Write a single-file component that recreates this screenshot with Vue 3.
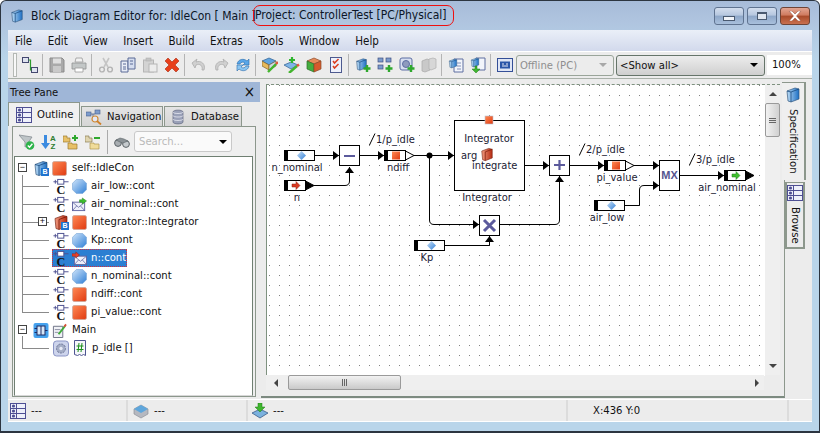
<template>
  <svg class="defs" aria-hidden="true">
    <defs>
      <linearGradient id="gBlue" x1="0" y1="0" x2="1" y2="1"><stop offset="0" stop-color="#cfe4fa"/><stop offset="1" stop-color="#2f7fd6"/></linearGradient>
      <linearGradient id="gRed" x1="0" y1="0" x2="1" y2="1"><stop offset="0" stop-color="#ff8a55"/><stop offset="1" stop-color="#e03a10"/></linearGradient>
      <linearGradient id="gBook" x1="0" y1="0" x2="1" y2="0"><stop offset="0" stop-color="#bcdcf5"/><stop offset="1" stop-color="#1c6fc4"/></linearGradient>
      <linearGradient id="gRedBook" x1="0" y1="0" x2="1" y2="0"><stop offset="0" stop-color="#f09a80"/><stop offset="1" stop-color="#b52a10"/></linearGradient>

      <symbol id="book" viewBox="0 0 16 16">
        <path d="M2 4 L10 1 L14 2 L14 12 L6 15 L3 14 Z" fill="url(#gBook)" stroke="#35597f" stroke-width=".7"/>
        <path d="M6 5 L14 2 M6 5 L6 15 M2 4 L6 5" fill="none" stroke="#17497d" stroke-width=".8"/>
      </symbol>
      <symbol id="redbook" viewBox="0 0 16 16">
        <path d="M2 4 L10 1 L14 2 L14 12 L6 15 L3 14 Z" fill="url(#gRedBook)" stroke="#7a2a1a" stroke-width=".7"/>
        <path d="M6 5 L14 2 M6 5 L6 15" fill="none" stroke="#7a1a08" stroke-width=".8"/>
      </symbol>
      <symbol id="square" viewBox="0 0 14 14"><rect x=".5" y=".5" width="13" height="13" rx="1.5" fill="url(#gRed)" stroke="#c9a79a" stroke-width=".7"/></symbol>
      <symbol id="ball" viewBox="0 0 14 14"><path d="M4 .5 H10 L13.5 4 V10 L10 13.5 H4 L.5 10 V4 Z" fill="url(#gBlue)" stroke="#7aa7d8" stroke-width=".6"/></symbol>
      <symbol id="envOut" viewBox="0 0 16 14">
        <rect x=".5" y="4.5" width="13" height="9" fill="#eef0fa" stroke="#5f649f"/>
        <path d="M.5 4.5 L7 10 L13.5 4.5 M.5 13.5 L5 8.5 M13.5 13.5 L9 8.5" fill="none" stroke="#5f649f" stroke-width=".8"/>
        <path d="M8 2 H11 V0 L15.5 3.2 L11 6.5 V4.5 H8 Z" fill="#3fbf2f" stroke="#1c7d16" stroke-width=".5"/>
      </symbol>
      <symbol id="envIn" viewBox="0 0 16 14">
        <rect x="2.5" y="4.5" width="13" height="9" fill="#eef0fa" stroke="#5f649f"/>
        <path d="M2.5 4.5 L9 10 L15.5 4.5 M2.5 13.5 L7 8.5 M15.5 13.5 L11 8.5" fill="none" stroke="#5f649f" stroke-width=".8"/>
        <path d="M0 2 H4 V0 L8 3.2 L4 6.5 V4.5 H0 Z" fill="#e8402a" stroke="#8e1d10" stroke-width=".5"/>
      </symbol>
      <symbol id="cport" viewBox="0 0 16 18">
        <path d="M0 4 H4 M11 4 H16 M2 2 V6" stroke="#4b4f8f" stroke-width="1" fill="none"/>
        <rect x="4.5" y="1.5" width="6.5" height="5" fill="#fff" stroke="#4b4f8f"/>
        <text x="8" y="17" text-anchor="middle" class="cletter">C</text>
      </symbol>
      <symbol id="grid" viewBox="0 0 16 16">
        <rect x=".5" y=".5" width="15" height="15" fill="#eef0fa" stroke="#4e4f93"/>
        <path d="M.5 5.5 H15.5 M.5 10.5 H15.5 M6.5 .5 V15.5" stroke="#4e4f93" fill="none"/>
        <circle cx="3.5" cy="3" r="1.6" fill="#4e4f93"/><circle cx="3.5" cy="8" r="1.6" fill="#4e4f93"/><circle cx="3.5" cy="13" r="1.6" fill="#4e4f93"/>
      </symbol>
      <symbol id="nav" viewBox="0 0 16 16">
        <rect x="0" y="3" width="5" height="4" fill="#7d9ccc" stroke="#47608e" stroke-width=".6"/>
        <rect x="9" y="1" width="5" height="4" fill="#7d9ccc" stroke="#47608e" stroke-width=".6"/>
        <path d="M5 5 H9 V5 M7 5 V10" stroke="#47608e" stroke-width=".8" fill="none"/>
        <circle cx="9" cy="10" r="3" fill="#e2e7f5" stroke="#d08a35" stroke-width="1.2"/>
        <path d="M11 12 L15 15.5" stroke="#d0802a" stroke-width="1.8"/>
      </symbol>
      <symbol id="db" viewBox="0 0 16 16">
        <path d="M3 3 C3 0.5 13 0.5 13 3 V13 C13 15.5 3 15.5 3 13 Z" fill="#9aa1b8" stroke="#5f6680" stroke-width=".7"/>
        <path d="M3 3 C3 5 13 5 13 3 M3 6.500 C3 8.500 13 8.500 13 6.500 M3 10 C3 12 13 12 13 10" fill="none" stroke="#e8eaf2" stroke-width=".8"/>
      </symbol>
      <symbol id="diagram" viewBox="0 0 16 16">
        <rect x=".5" y=".5" width="6" height="5" fill="#dfe2f0" stroke="#44486f"/><rect x="9.500" y="10.500" width="6" height="5" fill="#dfe2f0" stroke="#44486f"/>
        <path d="M6.500 3 H8.500 V13 H9.500" fill="none" stroke="#2c9a2c" stroke-width="1.200"/>
      </symbol>
      <symbol id="save" viewBox="0 0 16 16">
        <path d="M1 1 H13 L15 3 V15 H1 Z" fill="#a9a9a9" stroke="#8b8b8b"/>
        <rect x="4" y="1.500" width="8" height="5" fill="#dedede"/><rect x="4" y="9" width="8" height="6" fill="#c9c9c9"/>
      </symbol>
      <symbol id="print" viewBox="0 0 16 16">
        <path d="M5 1 H11 L12 5 H4 Z" fill="#f2f2f2" stroke="#9b9b9b" stroke-width=".8"/>
        <path d="M1 6 H15 V12 H1 Z" fill="#c3c7c7" stroke="#8f9393" stroke-width=".8"/>
        <path d="M4 11 H12 V15 H4 Z" fill="#fff" stroke="#9b9b9b" stroke-width=".8"/>
      </symbol>
      <symbol id="cut" viewBox="0 0 16 16">
        <path d="M5 1 L10 10 M11 1 L6 10" stroke="#c5c5c5" stroke-width="1.600" fill="none"/>
        <circle cx="4" cy="12.500" r="2.400" fill="none" stroke="#b3b3b3" stroke-width="1.400"/><circle cx="12" cy="12.500" r="2.400" fill="none" stroke="#b3b3b3" stroke-width="1.400"/>
      </symbol>
      <symbol id="copy" viewBox="0 0 16 16">
        <path d="M1 4 H8 V15 H1 Z" fill="#e9edf7" stroke="#5a6b96"/><path d="M8 1 H15 V12 H8 Z" fill="#d5ddef" stroke="#5a6b96"/>
        <path d="M3 7 H6 M3 10 H6 M3 12 H6 M10 4 H13 M10 7 H13" stroke="#5a6b96"/>
      </symbol>
      <symbol id="paste" viewBox="0 0 16 16">
        <rect x="1.500" y="3" width="10" height="12" fill="#d3d3d3" stroke="#b5b5b5"/><rect x="4" y="1" width="5" height="3" fill="#c4c4c4" stroke="#b0b0b0" stroke-width=".6"/>
        <rect x="7" y="7" width="8" height="8" fill="#ececec" stroke="#b5b5b5"/>
      </symbol>
      <symbol id="del" viewBox="0 0 16 16">
        <path d="M1 4 L4 1 L8 5 L12 1 L15 4 L11 8 L15 12 L12 15 L8 11 L4 15 L1 12 L5 8 Z" fill="#e8401c" stroke="#a82c10" stroke-width=".6"/>
      </symbol>
      <symbol id="undo" viewBox="0 0 16 16">
        <path d="M13 13 C15 7 10 3 5 5 L6 2 L1 6 L4 11 L5 8 C9 6 12 9 11 13 Z" fill="#d0d0d0" stroke="#adadad" stroke-width=".8"/>
      </symbol>
      <symbol id="redo" viewBox="0 0 16 16">
        <path d="M3 13 C1 7 6 3 11 5 L10 2 L15 6 L12 11 L11 8 C7 6 4 9 5 13 Z" fill="#d0d0d0" stroke="#adadad" stroke-width=".8"/>
      </symbol>
      <symbol id="refresh" viewBox="0 0 16 16">
        <path d="M2 7 C3 2 9 1 12 4 L14 2 V8 H8 L10 6 C8 4.500 6 5 5 7 Z" fill="#58a6e8" stroke="#2a6cab" stroke-width=".6"/>
        <path d="M14 9 C13 14 7 15 4 12 L2 14 V8 H8 L6 10 C8 11.500 10 11 11 9 Z" fill="#8cc6f2" stroke="#2a6cab" stroke-width=".6"/>
      </symbol>
      <symbol id="buildA" viewBox="0 0 16 16">
        <path d="M7 1 L14 4 L7 8 L0 4 Z" fill="#5fa4e0" stroke="#2f5f90" stroke-width=".7"/>
        <path d="M0 4 L7 8 V13 L0 9 Z" fill="#e7b95b" stroke="#7a6130" stroke-width=".7"/><path d="M14 4 L7 8 V13 L14 9 Z" fill="#cfd6e4" stroke="#7a6130" stroke-width=".7"/>
        <path d="M6 15 L14 7" stroke="#43b52e" stroke-width="2.400"/><path d="M14 7 L16 5" stroke="#e0553a" stroke-width="2.400"/>
      </symbol>
      <symbol id="buildB" viewBox="0 0 16 16">
        <path d="M7 5 L14 8 L7 12 L0 8 Z" fill="#7fb5e6" stroke="#2f5f90" stroke-width=".7"/>
        <path d="M8 0 V6 M5 3 H11" stroke="#2fb52e" stroke-width="2.200"/>
        <path d="M5 16 L13 9" stroke="#43b52e" stroke-width="2.400"/><path d="M13 9 L15 7.500" stroke="#e0553a" stroke-width="2.400"/>
      </symbol>
      <symbol id="buildC" viewBox="0 0 16 16">
        <path d="M8 1 L15 4 L8 7 L1 4 Z" fill="#e78b5a" stroke="#8a4a2a" stroke-width=".7"/>
        <path d="M1 4 L8 7 V15 L1 12 Z" fill="#44ad3e" stroke="#2c6f29" stroke-width=".7"/><path d="M15 4 L8 7 V15 L15 12 Z" fill="#d65a2c" stroke="#8a4a2a" stroke-width=".7"/>
      </symbol>
      <symbol id="check" viewBox="0 0 16 16">
        <rect x="2.500" y=".5" width="11" height="15" fill="#eef1fb" stroke="#4d5a8f"/>
        <path d="M5 4 L6.500 6 L10.500 2 M5 9 L6.500 11 L10.500 7" fill="none" stroke="#dc3d1f" stroke-width="1.500"/>
      </symbol>
      <symbol id="plusBook" viewBox="0 0 16 16">
        <use href="#book" width="13" height="15"/>
        <path d="M12 8 V15 M8.500 11.500 H15.500" stroke="#2fa82e" stroke-width="2.400"/>
      </symbol>
      <symbol id="plusBlock" viewBox="0 0 16 16">
        <rect x="1" y="1" width="5" height="4" fill="#7b9ccc" stroke="#3f4f80" stroke-width=".7"/><rect x="9" y="1" width="5" height="4" fill="#7b9ccc" stroke="#3f4f80" stroke-width=".7"/><rect x="1" y="8" width="5" height="4" fill="#7b9ccc" stroke="#3f4f80" stroke-width=".7"/>
        <path d="M12 8 V15 M8.500 11.500 H15.500" stroke="#2fa82e" stroke-width="2.400"/>
      </symbol>
      <symbol id="plusGear" viewBox="0 0 16 16">
        <rect x="1" y="1" width="12" height="12" rx="2" fill="#d7def0" stroke="#5d6ea3"/><circle cx="7" cy="7" r="3.500" fill="#8e9bbe" stroke="#5d6ea3"/>
        <path d="M12 8 V15 M8.500 11.500 H15.500" stroke="#2fa82e" stroke-width="2.400"/>
      </symbol>
      <symbol id="grayBooks" viewBox="0 0 16 16">
        <path d="M1 4 L6 2 L9 3 V13 L4 15 L1 14 Z" fill="#c9c9c9" stroke="#a9a9a9" stroke-width=".7"/><path d="M8 2 L12 1 L15 2 V11 L10 13 L8 12 Z" fill="#d7d7d7" stroke="#b0b0b0" stroke-width=".7"/>
      </symbol>
      <symbol id="docBook" viewBox="0 0 16 16">
        <path d="M6 2 H15 V15 H6 Z" fill="#f2f5fb" stroke="#5f6ea0"/><path d="M9 6 H13 M9 9 H13 M9 12 H13" stroke="#8390b8"/>
        <use href="#book" width="10" height="13"/>
      </symbol>
      <symbol id="docDown" viewBox="0 0 16 16">
        <path d="M6 1 H15 V13 H6 Z" fill="#f2f5fb" stroke="#5f6ea0"/>
        <use href="#book" width="10" height="11"/>
        <path d="M5 9 V12 H2 L6 16 L10 12 H7 V9 Z" fill="#3fb52f" stroke="#1e7d16" stroke-width=".5"/>
      </symbol>
      <symbol id="target" viewBox="0 0 16 14">
        <rect x=".5" y=".5" width="15" height="13" fill="#dfe6f5" stroke="#344f97"/>
        <rect x="3" y="3.500" width="10" height="7" fill="#2a56a8"/><path d="M5 6 H7 M9 6 H11 M5 8 H11" stroke="#e5e9f5"/>
      </symbol>
      <symbol id="funnel" viewBox="0 0 16 16">
        <path d="M0 1 L13 3 L9 9 V12 L6 13 V8 Z" fill="#bfc5c8" stroke="#7d8489" stroke-width=".7"/>
        <circle cx="11" cy="11.500" r="4.300" fill="#2eb34a"/><path d="M8.800 11.500 L10.500 13.200 L13.400 9.800" fill="none" stroke="#fff" stroke-width="1.400"/>
      </symbol>
      <symbol id="sort" viewBox="0 0 16 16">
        <path d="M3 1 H6 V9 H9 L4.500 15 L0 9 H3 Z" fill="#3c8be0"/>
        <text x="12" y="7" text-anchor="middle" class="sortletter">A</text><text x="12" y="15" text-anchor="middle" class="sortletter">Z</text>
      </symbol>
      <symbol id="folderPlus" viewBox="0 0 16 16">
        <path d="M0 2 H4 V4 H7 V8 H0 Z M5 9 H9 V10 H14 V15 H5 Z" fill="#e8c168" stroke="#9b7c30" stroke-width=".7"/>
        <path d="M12 1 V7 M9 4 H15" stroke="#2fa82e" stroke-width="2"/>
      </symbol>
      <symbol id="folderMinus" viewBox="0 0 16 16">
        <path d="M0 2 H4 V4 H7 V8 H0 Z" fill="#e0d5af" stroke="#8b7f55" stroke-width=".7"/>
        <path d="M5 9 H9 V10 H14 V15 H5 Z" fill="#f0dc9a" stroke="#b09a50" stroke-width=".7"/>
        <path d="M9 4 H15" stroke="#2fa82e" stroke-width="2"/>
      </symbol>
      <symbol id="binoc" viewBox="0 0 16 16">
        <circle cx="4" cy="9" r="3.400" fill="#a9aeb2" stroke="#5d6468"/><circle cx="12" cy="10" r="3.400" fill="#c6cbce" stroke="#5d6468"/>
        <path d="M2 6 L6 4 L10 5 L14 7 L9 9 L6 8 Z" fill="#8b9296" stroke="#5d6468" stroke-width=".6"/>
      </symbol>
      <symbol id="main" viewBox="0 0 16 16">
        <rect x=".5" y=".5" width="15" height="15" rx="2" fill="#46a2ee"/><rect x="4" y="3.500" width="8" height="9" fill="#d7e6f7" stroke="#1d2c66"/>
        <path d="M8 3.500 V12.500 M1.500 6 H4 M1.500 10 H4 M12 8 H14.500" stroke="#1d2c66"/>
      </symbol>
      <symbol id="note" viewBox="0 0 16 16">
        <path d="M1.500 3.500 H11.500 V15.500 H1.500 Z" fill="#f0f1f6" stroke="#6a6f82"/>
        <path d="M3 7 H9 M3 10 H7" stroke="#8c90a3"/><path d="M7 12 L14 3" stroke="#3eaa3a" stroke-width="2"/><path d="M13 4 L15 1.500" stroke="#d9503a" stroke-width="2"/>
      </symbol>
      <symbol id="gear" viewBox="0 0 16 16">
        <rect x=".5" y=".5" width="15" height="15" rx="3" fill="#cdd4ec" stroke="#8b95c5"/><circle cx="8" cy="8" r="4.500" fill="#a4adc6" stroke="#6d7698" stroke-dasharray="2 1"/><circle cx="8" cy="8" r="1.700" fill="#e7eaf5"/>
      </symbol>
      <symbol id="hash" viewBox="0 0 12 16">
        <path d="M.5 .5 H11.500 V15.500 L9.500 14.500 L7.500 15.500 L5.500 14.500 L3.500 15.500 L.5 14.500 Z" fill="#f6f7fb" stroke="#4e5590"/>
        <path d="M5 3 L4 12 M8 3 L7 12 M2.500 6 H9.500 M2.500 9.500 H9.500" stroke="#1c8f1c" stroke-width="1"/>
      </symbol>
      <symbol id="chip" viewBox="0 0 16 16">
        <path d="M1 6 L8 2 L15 6 V11 L8 15 L1 11 Z" fill="#b5b8c0" stroke="#85888f" stroke-width=".6"/><path d="M1 6 L8 10 L15 6 L8 2 Z" fill="#5ea6dc"/>
      </symbol>
      <symbol id="loadDown" viewBox="0 0 16 16">
        <path d="M0 10 L8 6 L16 10 L8 15 Z" fill="#7bb1de" stroke="#2d4f7c" stroke-width=".7"/>
        <path d="M6 0 H10 V4 H13 L8 9 L3 4 H6 Z" fill="#3fb52f" stroke="#1e7d16" stroke-width=".5"/>
      </symbol>
    </defs>
  </svg>

  <div class="window">
    <header class="titlebar">
      <svg class="title-icon"><use href="#book"/></svg>
      <span class="title-text">Block Diagram Editor for: IdleCon [ Main ]</span>
      <span class="project-mark">Project: ControllerTest [PC/Physical]</span>
      <div class="caption-buttons">
        <button class="cap"><i class="cap-min"></i></button>
        <button class="cap"><i class="cap-max"></i></button>
        <button class="cap cap-close">
          <svg viewBox="0 0 14 10" width="14" height="10"><path d="M1 0 H4 L7 3 L10 0 H13 L8.500 5 L13 10 H10 L7 7 L4 10 H1 L5.500 5 Z" fill="#fff" stroke="#8a4a3a" stroke-width=".5"/></svg>
        </button>
      </div>
    </header>

    <nav class="menubar">
      <span v-for="item in menuItems" :key="item">{{ item }}</span>
    </nav>

    <div class="toolbar">
      <i class="grip"></i>
      <template v-for="(tool, i) in tools" :key="i">
        <i v-if="tool === '|'" class="tool-sep"></i>
        <svg v-else class="tool"><use :href="'#' + tool"/></svg>
      </template>
      <div class="combo combo-offline"><span>Offline (PC)</span><i class="arrow arrow-gray"></i></div>
      <div class="combo combo-show"><span>&lt;Show all&gt;</span><i class="arrow"></i></div>
      <div class="zoom-field">100%</div>
    </div>

    <main class="content">
      <section class="tree-pane">
        <div class="pane-title"><span>Tree Pane</span><b>×</b></div>
        <div class="tabs">
          <div class="tab tab-on"><svg class="ic16"><use href="#grid"/></svg>Outline</div>
          <div class="tab tab-nav"><svg class="ic16"><use href="#nav"/></svg>Navigation</div>
          <div class="tab tab-db"><svg class="ic16"><use href="#db"/></svg>Database</div>
        </div>
        <div class="pane-body">
          <div class="pane-tools">
            <svg class="ic16"><use href="#funnel"/></svg>
            <svg class="ic16"><use href="#sort"/></svg>
            <svg class="ic16"><use href="#folderPlus"/></svg>
            <svg class="ic16"><use href="#folderMinus"/></svg>
            <i class="pane-sep"></i>
            <svg class="ic16"><use href="#binoc"/></svg>
            <div class="search"><span>Search...</span><i class="arrow"></i></div>
          </div>
          <div class="tree">
            <i class="tree-line line-a"></i>
            <i class="tree-line line-b"></i>
            <div v-for="row in treeRows" :key="row.label" class="row" :class="{ 'row-top': row.top }">
              <i v-if="row.toggle" class="toggle" :class="row.top ? 'toggle-top' : 'toggle-sub'">{{ row.toggle }}</i>
              <i v-if="!row.top" class="branch"></i>
              <div class="row-body" :class="{ selected: row.selected }">
                <svg class="row-ic"><use :href="'#' + row.icon"/></svg>
                <small v-if="row.badge" class="badge">B</small>
                <svg class="row-ic row-ic2" :class="row.icon2 === 'hash' ? 'ic-hash' : ''"><use :href="'#' + row.icon2"/></svg>
                <span class="row-text">{{ row.label }}</span>
              </div>
            </div>
          </div>
        </div>
      </section>

      <section class="editor">
        <div class="editor-frame">
          <div class="editor-top">
            <svg class="canvas" viewBox="267 87 498 291" width="498" height="291">
              <defs>
                <pattern id="dots" x="0" y="0" width="10" height="10" patternUnits="userSpaceOnUse">
                  <rect x="9" y="7" width="1" height="1" fill="#808080"/>
                </pattern>
                <marker id="ah" markerWidth="7" markerHeight="9" refX="6" refY="4.500" orient="auto" markerUnits="userSpaceOnUse">
                  <path d="M0 0 L6 4.500 L0 9 Z" fill="#000"/>
                </marker>
              </defs>
              <rect x="267" y="87" width="498" height="291" fill="#fff"/>
              <rect x="267" y="87" width="498" height="291" fill="url(#dots)"/>

              <path v-for="w in wires" :key="w" :d="w" class="wire" marker-end="url(#ah)"/>
              <path d="M414 157.500 H429" class="wire"/>
              <circle cx="429.500" cy="157.500" r="3" fill="#000"/>

              <g v-for="p in ports" :key="p.label">
                <path v-if="p.tip" :d="`M${p.x + 20.500} ${p.y + .5} L${p.x + 30} ${p.y + 5.500} L${p.x + 20.500} ${p.y + 10.500} Z`" :fill="p.tip" stroke="#000"/>
                <rect :x="p.x + .5" :y="p.y + .5" :width="p.w" height="10" fill="#fff" stroke="#000"/>
                <rect :x="p.x" :y="p.y" width="4" height="11" fill="#000"/>
                <path v-if="p.mark === 'diamond'" :d="`M${p.x + 17.500} ${p.y + 1} l4.500 4.500 l-4.500 4.500 l-4.500 -4.500 Z`" fill="url(#gBlue)"/>
                <rect v-else-if="p.mark === 'square'" :x="p.x + 8" :y="p.y + 1.500" width="8" height="8" fill="url(#gRed)"/>
                <path v-else-if="p.mark === 'in'" :d="`M${p.x + 8} ${p.y + 4} h4 v-2.500 l4 4 l-4 4 v-2.500 h-4 Z`" fill="#d93a22" stroke="#8e1d10" stroke-width=".5"/>
                <path v-else-if="p.mark === 'out'" :d="`M${p.x + 8} ${p.y + 4} h4 v-2.500 l4 4 l-4 4 v-2.500 h-4 Z`" fill="#3fbf2f" stroke="#1c7d16" stroke-width=".5"/>
                <text :x="p.lx" :y="p.y + 20.500" text-anchor="middle" class="dtext">{{ p.label }}</text>
              </g>

              <rect v-for="b in opBoxes" :key="b.x" :x="b.x + .5" :y="b.y + .5" width="20" :height="b.h" fill="#fff" stroke="#000"/>
              <rect x="344" y="157" width="11" height="2" fill="#5b5a9c"/>
              <path d="M559.500 162 V172 M554 167 H565" stroke="#5b5a9c" stroke-width="2.200"/>
              <path d="M484 222 L495 233 M495 222 L484 233" stroke="#5b5a9c" stroke-width="3"/>
              <text x="669.500" y="181" text-anchor="middle" class="mx">MX</text>

              <rect x="454.500" y="122.500" width="70" height="70" fill="#fff" stroke="#000"/>
              <rect x="485" y="118" width="8" height="8" fill="url(#gRed)" stroke="#b9c3d3" stroke-width=".6"/>
              <text x="489" y="143.500" text-anchor="middle" class="dtext">Integrator</text>
              <text x="461" y="161" class="dtext">arg</text>
              <use href="#redbook" x="480" y="149" width="14" height="15"/>
              <text x="472" y="171" class="dtext">integrate</text>
              <text x="487" y="203" text-anchor="middle" class="dtext">Integrator</text>

              <g v-for="t in tags" :key="t.text">
                <path :d="`M${t.x - 5.500} ${t.y + 2} L${t.x} ${t.y - 9.500}`" stroke="#000" fill="none"/>
                <text :x="t.x + 1" :y="t.y" class="dtext">{{ t.text }}</text>
              </g>
            </svg>
            <div class="vscroll">
              <i class="arrow arrow-up"></i>
              <div class="vthumb"><i></i><i></i><i></i></div>
              <i class="arrow arrow-down"></i>
            </div>
          </div>
          <div class="hscroll">
            <i class="arrow-left"></i>
            <div class="hthumb"><i></i><i></i><i></i></div>
            <i class="arrow-right"></i>
          </div>
        </div>
        <div class="side-tabs">
          <div class="side-tab side-on"><svg class="ic16"><use href="#book"/></svg><span>Specification</span></div>
          <div class="side-tab side-off"><svg class="ic16"><use href="#grid"/></svg><span>Browse</span></div>
        </div>
      </section>
    </main>

    <footer class="statusbar">
      <div class="cell cell-a"><svg class="ic16"><use href="#grid"/></svg><span>---</span></div>
      <div class="cell cell-b"><svg class="ic16"><use href="#chip"/></svg><span>---</span></div>
      <div class="cell cell-c"><svg class="ic16"><use href="#loadDown"/></svg><span>---</span></div>
      <div class="cell cell-d">X:436 Y:0</div>
      <div class="cell cell-e"></div>
    </footer>
  </div>
</template>

<script setup>
const menuItems = ['File', 'Edit', 'View', 'Insert', 'Build', 'Extras', 'Tools', 'Window', 'Help']

const tools = [
  'diagram', '|', 'save', 'print', '|', 'cut', 'copy', 'paste', 'del', '|',
  'undo', 'redo', 'refresh', '|', 'buildA', 'buildB', 'buildC', 'check', '|',
  'plusBook', 'plusBlock', 'plusGear', 'grayBooks', '|', 'docBook', 'docDown', '|', 'target'
]

const treeRows = [
  { label: 'self::IdleCon', top: true, toggle: '−', icon: 'book', badge: true, icon2: 'square' },
  { label: 'air_low::cont', icon: 'cport', icon2: 'ball' },
  { label: 'air_nominal::cont', icon: 'cport', icon2: 'envOut' },
  { label: 'Integrator::Integrator', toggle: '+', icon: 'redbook', badge: true, icon2: 'square' },
  { label: 'Kp::cont', icon: 'cport', icon2: 'ball' },
  { label: 'n::cont', icon: 'cport', icon2: 'envIn', selected: true },
  { label: 'n_nominal::cont', icon: 'cport', icon2: 'ball' },
  { label: 'ndiff::cont', icon: 'cport', icon2: 'square' },
  { label: 'pi_value::cont', icon: 'cport', icon2: 'square' },
  { label: 'Main', top: true, toggle: '−', icon: 'main', icon2: 'note' },
  { label: 'p_idle []', icon: 'gear', icon2: 'hash' }
]

// diagram coordinates are page pixels, the svg viewBox starts at the canvas corner
const wires = [
  'M315 157.500 H339',
  'M360 157.500 H384',
  'M429 157.500 H454',
  'M314 187.500 H345 Q349.500 187.500 349.500 183 V169',
  'M429.500 157.500 V222 Q429.500 226.500 434 226.500 H479',
  'M445 247.500 H489.500 V238',
  'M525 167.500 H549',
  'M500 226.500 H555 Q559.500 226.500 559.500 222 V178',
  'M570 167.500 H604',
  'M634 167.500 H659',
  'M625 207.500 H639.500 V192 Q639.500 187.500 644 187.500 H659',
  'M680 177.500 H724'
]

const ports = [
  { label: 'n_nominal', x: 284, y: 152, w: 30, lx: 297, mark: 'diamond' },
  { label: 'n', x: 284, y: 182, w: 21, lx: 297, mark: 'in', tip: '#000' },
  { label: 'ndiff', x: 384, y: 152, w: 21, lx: 398, mark: 'square', tip: '#fff' },
  { label: 'Kp', x: 414, y: 242, w: 30, lx: 427, mark: 'diamond' },
  { label: 'pi_value', x: 604, y: 162, w: 21, lx: 617, mark: 'square', tip: '#fff' },
  { label: 'air_low', x: 594, y: 202, w: 30, lx: 607, mark: 'diamond' },
  { label: 'air_nominal', x: 724, y: 172, w: 21, lx: 727, mark: 'out', tip: '#000' }
]

const opBoxes = [
  { x: 339, y: 147, h: 20 },
  { x: 479, y: 217, h: 20 },
  { x: 549, y: 157, h: 20 },
  { x: 659, y: 162, h: 30 }
]

const tags = [
  { x: 375, y: 145, text: '1/p_idle' },
  { x: 585, y: 155, text: '2/p_idle' },
  { x: 695, y: 165, text: '3/p_idle' }
]
</script>

<style>
html, body { margin: 0; background: #fff; }
</style>

<style scoped>
.defs { display: block; width: 0; height: 0; overflow: hidden; }
.cletter { font: bold 13px "Liberation Serif", serif; fill: #111; }
.sortletter { font: bold 8px "Liberation Sans", sans-serif; fill: #2f7d2f; }

.window {
  width: 820px;
  height: 433px;
  box-sizing: border-box;
  padding: 0 7px 9px;
  display: flex;
  flex-direction: column;
  overflow: hidden;
  border-radius: 6px 6px 0 0;
  border: 1px solid #2c3540;
  border-width: 1px 1px 2px;
  background: linear-gradient(#a7bcd9 0, #afc4df 20px, #b9d5ea 60px, #b9d5ea 100%);
  font: 11.2px "DejaVu Sans Condensed", "Liberation Sans", sans-serif;
  color: #111;
}

.titlebar {
  height: 29px;
  flex: none;
  display: flex;
  align-items: center;
  padding-left: 2px;
  font-size: 12px;
  color: #0b1526;
}
.title-icon { width: 14px; height: 16px; flex: none; margin-right: 7px; }
.title-text { white-space: nowrap; width: 222px; flex: none; }
.project-mark {
  box-sizing: border-box;
  width: 201px;
  height: 21px;
  line-height: 19px;
  padding-left: 1px;
  border: 1px solid #ee1010;
  border-radius: 7px;
  white-space: nowrap;
  flex: none;
}
.caption-buttons { margin-left: auto; display: flex; gap: 3px; margin-right: 2px; }
.cap {
  width: 30px;
  height: 18px;
  padding: 0;
  border: 1px solid #5f7390;
  border-radius: 3px;
  background: linear-gradient(#d3deee 0, #b6c7df 45%, #8ea7c8 50%, #a9c0dc 100%);
  display: flex;
  align-items: center;
  justify-content: center;
}
.cap-min { width: 10px; height: 3px; border: 1px solid #4a5a70; background: #f1f4f9; margin-top: 5px; }
.cap-max { width: 8px; height: 5px; border: 1px solid #4a5a70; border-top-width: 2px; background: #dfe6f0; }
.cap-close {
  border-color: #6f4436;
  background: linear-gradient(#e2a592 0, #cf7a5f 45%, #a84a2a 50%, #c9704f 100%);
}

.menubar {
  height: 21px;
  flex: none;
  display: flex;
  align-items: center;
  padding-left: 7px;
  gap: 15.500px;
  background: linear-gradient(#eaeff8, #d2d9ec);
  font-size: 11.500px;
}

.toolbar {
  height: 28px;
  flex: none;
  box-sizing: border-box;
  display: flex;
  align-items: center;
  background: #ececec;
  border-top: 1px solid #fff;
  border-bottom: 1px solid #a9b0a9;
  padding-left: 5px;
}
.grip { width: 2px; height: 22px; border: 1px solid #b5b9b5; background: #f8f8f8; margin-right: 2px; }
.tool { width: 16px; height: 16px; padding: 0 3px; flex: none; }
.tool-sep { width: 1px; height: 22px; background: #b4b4b4; margin: 0 3px 0 1px; flex: none; }
.combo {
  box-sizing: border-box;
  height: 21px;
  display: flex;
  align-items: center;
  border: 1px solid #9aa59a;
  border-radius: 3px;
  padding: 0 6px 0 3px;
  justify-content: space-between;
  flex: none;
}
.combo-offline { width: 98px; background: #ececec; color: #8f8f8f; }
.combo-show { width: 149px; margin-left: 2px; background: linear-gradient(#ededed, #cfcfcf); border-color: #66756a; color: #111; }
.zoom-field { width: 46px; margin-left: 2px; background: #fff; height: 20px; line-height: 20px; padding-left: 5px; box-sizing: border-box; }
.arrow { width: 0; height: 0; border: 4px solid transparent; border-top: 4px solid #000; border-bottom: 0; display: block; }
.arrow-gray { border-top-color: #a8a8a8; }

.content { flex: 1; display: flex; min-height: 0; background: #ececec; padding-top: 3px; }

.tree-pane { width: 252px; flex: none; display: flex; flex-direction: column; margin-right: 1px; }
.pane-title {
  height: 20px;
  flex: none;
  display: flex;
  align-items: center;
  justify-content: space-between;
  padding: 0 5px 0 2px;
  background: #9fb6d7;
}
.pane-title b { font-weight: normal; font-size: 15px; line-height: 1; }
.tabs { height: 24px; flex: none; display: flex; align-items: flex-end; }
.tab {
  box-sizing: border-box;
  height: 20px;
  display: flex;
  align-items: center;
  border: 1px solid #8c978c;
  border-bottom: 0;
  background: linear-gradient(#e4e4e4, #d6d6d6);
  margin-left: 1px;
}
.tab .ic16 { margin-right: 5px; }
.tab-on { width: 72px; height: 24px; background: #f0f0f0; padding-left: 7px; margin-left: 0; }
.tab-nav { width: 82px; padding-left: 4px; }
.tab-db { width: 78px; padding-left: 5px; }
.ic16 { width: 16px; height: 16px; flex: none; display: block; }

.pane-body {
  flex: 1;
  min-height: 0;
  margin: 0 4px 2px 4px;
  border: 1px solid #8c978c;
  display: flex;
  flex-direction: column;
  padding: 0 2px 0 1px;
  background: #efefef;
}
.pane-tools { height: 29px; flex: none; display: flex; align-items: center; padding-left: 5px; gap: 6px; }
.pane-sep { width: 1px; height: 24px; background: #aaa; }
.search {
  box-sizing: border-box;
  width: 98px;
  height: 21px;
  border: 1px solid #c9c9c9;
  border-radius: 3px;
  background: #fafafa;
  color: #b9b9b9;
  display: flex;
  align-items: center;
  justify-content: space-between;
  padding: 0 4px;
  margin-left: -2px;
}
.tree {
  flex: 1;
  min-height: 0;
  position: relative;
  background: #fff;
  border: 1px solid #6f7f72;
  border-bottom-color: #d8d8d8;
  padding-top: 2px;
}
.tree-line { position: absolute; width: 1px; background: #8a8a8a; left: 7px; }
.line-a { top: 18px; height: 138px; }
.line-b { top: 179px; height: 13px; }
.row { height: 18px; display: flex; align-items: center; position: relative; padding-left: 37px; white-space: nowrap; }
.row-top { padding-left: 17px; }
.row-body { display: flex; align-items: center; height: 18px; padding-left: 1px; padding-right: 1px; }
.row-body.selected {
  background: #2b7fd2;
  color: #fff;
  outline: 1px dotted #d8303a;
  outline-offset: -1px;
}
.branch { position: absolute; left: 7px; width: 27px; top: 9px; height: 1px; background: #8a8a8a; }
.toggle {
  position: absolute;
  box-sizing: border-box;
  width: 9px;
  height: 9px;
  border: 1px solid #444;
  background: #fff;
  font: normal 9px/7px "Liberation Sans", sans-serif;
  text-align: center;
  top: 4px;
  z-index: 1;
}
.toggle-top { left: 3px; }
.toggle-sub { left: 23px; }
.row-ic { width: 16px; height: 17px; flex: none; display: block; }
.row-ic2 { width: 15px; height: 15px; margin: 0 4px 0 3px; }
.ic-hash { width: 12px; margin: 0 6px 0 5px; height: 16px; }
.badge {
  position: absolute;
  left: 46px;
  top: 9px;
  width: 8px;
  height: 8px;
  background: #1f73cf;
  color: #fff;
  font: bold 7px/8px "Liberation Sans", sans-serif;
  text-align: center;
}
.row-top .badge { left: 26px; }
.row-top .row-ic2 { margin-left: 3px; margin-right: 5px; }
.row-text { line-height: 16px; }

.editor { flex: 1; min-width: 0; display: flex; background: #ececec; }
.editor-frame {
  box-sizing: border-box;
  width: 524px;
  margin-top: 2px;
  margin-bottom: 1px;
  flex: none;
  padding: 0 4px 6px 5px;
  border-right: 1px solid #8c978c;
  border-bottom: 2px solid #7c8a80;
  display: flex;
  flex-direction: column;
}
.editor-top { flex: 1; min-height: 0; display: flex; border-top: 1px dashed #7e917f; border-left: 1px solid #7e917f; }
.canvas { display: block; flex: none; }
.vscroll {
  width: 15px;
  flex: none;
  background: #efefef;
  display: flex;
  flex-direction: column;
  align-items: center;
  padding: 7px 0;
  box-sizing: border-box;
}
.arrow-up { border-top: 0; border-bottom: 4px solid #444; }
.vthumb {
  box-sizing: border-box;
  width: 15px;
  height: 34px;
  margin-top: 7px;
  border: 1px solid #9a9a9a;
  border-radius: 2px;
  background: linear-gradient(90deg, #f2f2f2, #d0d0d0);
  display: flex;
  flex-direction: column;
  gap: 1px;
  align-items: center;
  justify-content: center;
}
.vthumb i { width: 7px; height: 1px; background: #666; }
.arrow-down { margin-top: auto; border-top-color: #444; }
.hscroll {
  height: 15px;
  flex: none;
  display: flex;
  align-items: center;
  padding-left: 8px;
  background: #efefef;
  margin-right: 16px;
}
.arrow-left { width: 0; height: 0; border: 4px solid transparent; border-left: 0; border-right: 4px solid #444; }
.arrow-right { width: 0; height: 0; border: 4px solid transparent; border-right: 0; border-left: 4px solid #444; margin-left: auto; margin-right: 5px; }
.hthumb {
  box-sizing: border-box;
  width: 113px;
  height: 15px;
  margin-left: 10px;
  border: 1px solid #9a9a9a;
  border-radius: 2px;
  background: linear-gradient(#f2f2f2, #c9c9c9);
  display: flex;
  gap: 1px;
  align-items: center;
  justify-content: center;
}
.hthumb i { width: 1px; height: 7px; background: #666; }

.side-tabs { flex: 1; display: flex; flex-direction: column; min-width: 0; }
.side-tab { display: flex; flex-direction: column; align-items: center; box-sizing: border-box; }
.side-tab span { writing-mode: vertical-rl; margin-top: 6px; }
.side-on {
  height: 98px;
  width: 24px;
  margin-left: -3px;
  border-right: 2px solid #8c978c;
  border-top: 1px solid #8c978c;
  margin-top: 0;
  padding-top: 4px;
  background: #efefef;
  z-index: 1;
}
.side-off {
  height: 67px;
  width: 20px;
  margin-top: 2px;
  border: 1px solid #8c978c;
  border-left-width: 2px;
  border-right-width: 2px;
  border-bottom-width: 2px;
  background: #ececec;
  padding-top: 2px;
}

.statusbar {
  height: 23px;
  flex: none;
  box-sizing: border-box;
  display: flex;
  background: #ececec;
  border-bottom: 1px solid #fff;
  border-top: 1px solid #fff;
}
.cell { display: flex; align-items: center; gap: 5px; box-sizing: border-box; border-right: 2px solid #dcdcdc; flex: none; padding-left: 2px; }
.cell-a { width: 120px; }
.cell-b { width: 120px; padding-left: 5px; }
.cell-c { width: 320px; padding-left: 4px; }
.cell-d { width: 221px; padding-left: 25px; }
.cell-e { width: 24px; border-right: 0; }

.dtext { font-size: 11px; fill: #1b1b33; }
.mx { font: bold 11px "Liberation Sans", sans-serif; fill: #56558f; }
.wire { fill: none; stroke: #000; stroke-width: 1; }
</style>
